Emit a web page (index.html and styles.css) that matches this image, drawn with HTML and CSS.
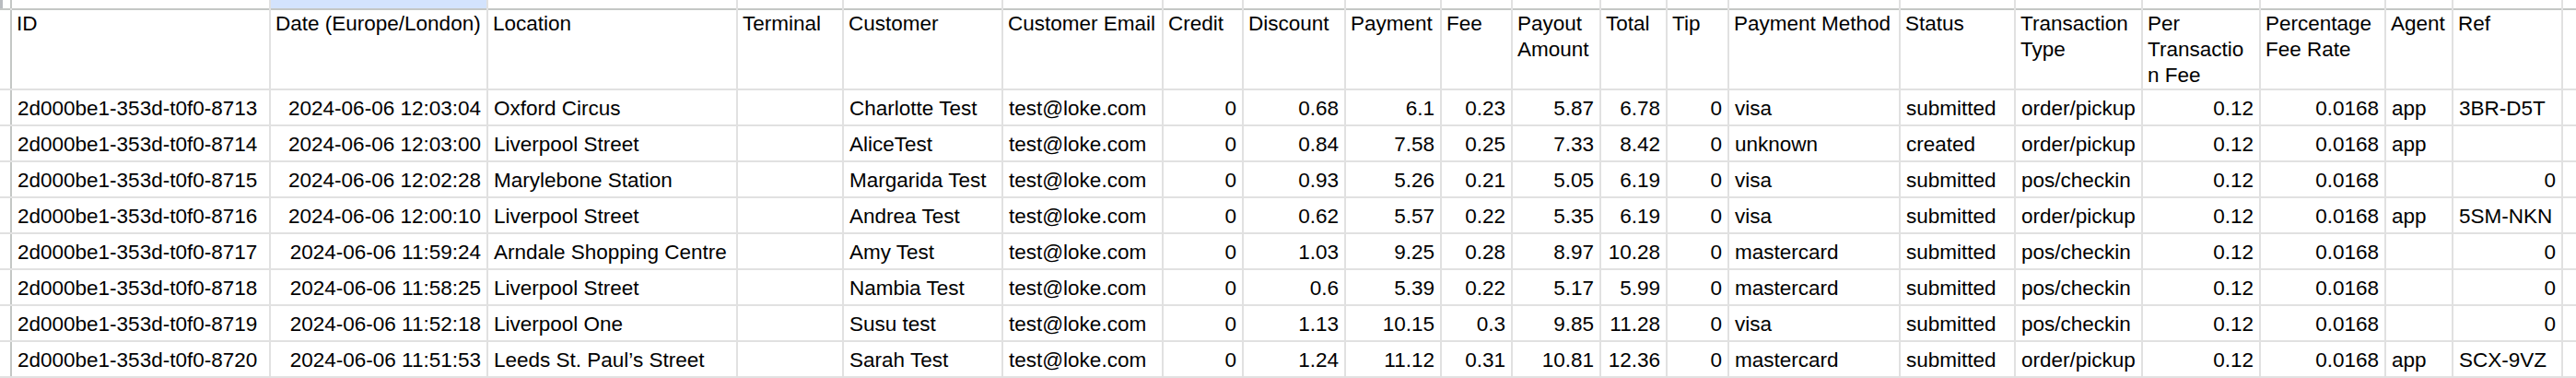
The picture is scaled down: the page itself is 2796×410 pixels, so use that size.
FILE: index.html
```html
<!DOCTYPE html>
<html lang="en">
<head>
<meta charset="utf-8">
<title>Transactions</title>
<link rel="stylesheet" href="styles.css">
</head>
<body>
<div class="sheet">
  <div class="row letters">
    <div class="corner"></div>
    <div class="col"></div><div class="col sel"></div><div class="col"></div><div class="col"></div><div class="col"></div>
    <div class="col"></div><div class="col"></div><div class="col"></div><div class="col"></div><div class="col"></div>
    <div class="col"></div><div class="col"></div><div class="col"></div><div class="col"></div><div class="col"></div>
    <div class="col"></div><div class="col"></div><div class="col"></div><div class="col"></div><div class="col"></div>
    <div class="col"></div>
  </div>
  <div class="row head">
    <div class="rh"></div>
    <div class="c">ID</div><div class="c">Date (Europe/London)</div><div class="c">Location</div><div class="c">Terminal</div><div class="c">Customer</div>
    <div class="c">Customer Email</div><div class="c">Credit</div><div class="c">Discount</div><div class="c">Payment</div><div class="c">Fee</div>
    <div class="c">Payout Amount</div><div class="c">Total</div><div class="c">Tip</div><div class="c">Payment Method</div><div class="c">Status</div>
    <div class="c">Transaction Type</div><div class="c tight">Per Transaction Fee</div><div class="c">Percentage Fee Rate</div><div class="c">Agent</div><div class="c">Ref</div>
    <div class="c"></div>
  </div>
  <div class="row">
    <div class="rh"></div>
    <div class="c">2d000be1-353d-t0f0-8713</div><div class="c n">2024-06-06 12:03:04</div><div class="c">Oxford Circus</div><div class="c"></div><div class="c">Charlotte Test</div>
    <div class="c">test@loke.com</div><div class="c n">0</div><div class="c n">0.68</div><div class="c n">6.1</div><div class="c n">0.23</div>
    <div class="c n">5.87</div><div class="c n">6.78</div><div class="c n">0</div><div class="c">visa</div><div class="c">submitted</div>
    <div class="c">order/pickup</div><div class="c n">0.12</div><div class="c n">0.0168</div><div class="c">app</div><div class="c">3BR-D5T</div>
    <div class="c"></div>
  </div>
  <div class="row">
    <div class="rh"></div>
    <div class="c">2d000be1-353d-t0f0-8714</div><div class="c n">2024-06-06 12:03:00</div><div class="c">Liverpool Street</div><div class="c"></div><div class="c">AliceTest</div>
    <div class="c">test@loke.com</div><div class="c n">0</div><div class="c n">0.84</div><div class="c n">7.58</div><div class="c n">0.25</div>
    <div class="c n">7.33</div><div class="c n">8.42</div><div class="c n">0</div><div class="c">unknown</div><div class="c">created</div>
    <div class="c">order/pickup</div><div class="c n">0.12</div><div class="c n">0.0168</div><div class="c">app</div><div class="c"></div>
    <div class="c"></div>
  </div>
  <div class="row">
    <div class="rh"></div>
    <div class="c">2d000be1-353d-t0f0-8715</div><div class="c n">2024-06-06 12:02:28</div><div class="c">Marylebone Station</div><div class="c"></div><div class="c">Margarida Test</div>
    <div class="c">test@loke.com</div><div class="c n">0</div><div class="c n">0.93</div><div class="c n">5.26</div><div class="c n">0.21</div>
    <div class="c n">5.05</div><div class="c n">6.19</div><div class="c n">0</div><div class="c">visa</div><div class="c">submitted</div>
    <div class="c">pos/checkin</div><div class="c n">0.12</div><div class="c n">0.0168</div><div class="c"></div><div class="c n">0</div>
    <div class="c"></div>
  </div>
  <div class="row">
    <div class="rh"></div>
    <div class="c">2d000be1-353d-t0f0-8716</div><div class="c n">2024-06-06 12:00:10</div><div class="c">Liverpool Street</div><div class="c"></div><div class="c">Andrea Test</div>
    <div class="c">test@loke.com</div><div class="c n">0</div><div class="c n">0.62</div><div class="c n">5.57</div><div class="c n">0.22</div>
    <div class="c n">5.35</div><div class="c n">6.19</div><div class="c n">0</div><div class="c">visa</div><div class="c">submitted</div>
    <div class="c">order/pickup</div><div class="c n">0.12</div><div class="c n">0.0168</div><div class="c">app</div><div class="c">5SM-NKN</div>
    <div class="c"></div>
  </div>
  <div class="row">
    <div class="rh"></div>
    <div class="c">2d000be1-353d-t0f0-8717</div><div class="c n">2024-06-06 11:59:24</div><div class="c">Arndale Shopping Centre</div><div class="c"></div><div class="c">Amy Test</div>
    <div class="c">test@loke.com</div><div class="c n">0</div><div class="c n">1.03</div><div class="c n">9.25</div><div class="c n">0.28</div>
    <div class="c n">8.97</div><div class="c n">10.28</div><div class="c n">0</div><div class="c">mastercard</div><div class="c">submitted</div>
    <div class="c">pos/checkin</div><div class="c n">0.12</div><div class="c n">0.0168</div><div class="c"></div><div class="c n">0</div>
    <div class="c"></div>
  </div>
  <div class="row">
    <div class="rh"></div>
    <div class="c">2d000be1-353d-t0f0-8718</div><div class="c n">2024-06-06 11:58:25</div><div class="c">Liverpool Street</div><div class="c"></div><div class="c">Nambia Test</div>
    <div class="c">test@loke.com</div><div class="c n">0</div><div class="c n">0.6</div><div class="c n">5.39</div><div class="c n">0.22</div>
    <div class="c n">5.17</div><div class="c n">5.99</div><div class="c n">0</div><div class="c">mastercard</div><div class="c">submitted</div>
    <div class="c">pos/checkin</div><div class="c n">0.12</div><div class="c n">0.0168</div><div class="c"></div><div class="c n">0</div>
    <div class="c"></div>
  </div>
  <div class="row">
    <div class="rh"></div>
    <div class="c">2d000be1-353d-t0f0-8719</div><div class="c n">2024-06-06 11:52:18</div><div class="c">Liverpool One</div><div class="c"></div><div class="c">Susu test</div>
    <div class="c">test@loke.com</div><div class="c n">0</div><div class="c n">1.13</div><div class="c n">10.15</div><div class="c n">0.3</div>
    <div class="c n">9.85</div><div class="c n">11.28</div><div class="c n">0</div><div class="c">visa</div><div class="c">submitted</div>
    <div class="c">pos/checkin</div><div class="c n">0.12</div><div class="c n">0.0168</div><div class="c"></div><div class="c n">0</div>
    <div class="c"></div>
  </div>
  <div class="row">
    <div class="rh"></div>
    <div class="c">2d000be1-353d-t0f0-8720</div><div class="c n">2024-06-06 11:51:53</div><div class="c">Leeds St. Paul’s Street</div><div class="c"></div><div class="c">Sarah Test</div>
    <div class="c">test@loke.com</div><div class="c n">0</div><div class="c n">1.24</div><div class="c n">11.12</div><div class="c n">0.31</div>
    <div class="c n">10.81</div><div class="c n">12.36</div><div class="c n">0</div><div class="c">mastercard</div><div class="c">submitted</div>
    <div class="c">order/pickup</div><div class="c n">0.12</div><div class="c n">0.0168</div><div class="c">app</div><div class="c">SCX-9VZ</div>
    <div class="c"></div>
  </div>
</div>
</body>
</html>
```
FILE: styles.css
```css
html, body {
  margin: 0;
  padding: 0;
  background: #ffffff;
  overflow: hidden;
}

body {
  width: 2796px;
  height: 410px;
  font-family: "Liberation Sans", Arial, sans-serif;
  font-size: 22.5px;
  color: #000000;
}

.sheet {
  display: grid;
  grid-template-columns:
    11px 279px 234px 269px 113px 171px 172px 85px 109px 102px 75px
    94px 70px 65px 184px 123px 136px 126px 134px 71px 117px 1fr;
  grid-template-rows: 9px 85px repeat(8, 37px);
  gap: 2px;
  background: #e1e1e1;
  width: 2796px;
  height: 410px;
  align-content: start;
}

.row {
  display: contents;
}

.corner {
  background: linear-gradient(to right, #b9bcc0 3px, #ffffff 3px);
  box-shadow: 0 2px 0 #c4c7c5, 2px 0 0 #c4c7c5;
}

.col {
  background: #ffffff;
  box-shadow: 0 2px 0 #c4c7c5;
}

.col.sel {
  background: #d3e3fd;
}

.rh {
  background: #ffffff;
  box-shadow: 2px 0 0 #c4c7c5;
}

.c {
  background: #ffffff;
  padding: 0 6px 5px 6px;
  line-height: 25px;
  white-space: nowrap;
  overflow: hidden;
  display: flex;
  align-items: flex-end;
}

.c.n {
  justify-content: flex-end;
}

.head .c {
  white-space: normal;
  overflow-wrap: anywhere;
  align-items: flex-start;
  line-height: 28px;
  padding: 1px 4px 0 5px;
}

.head .c.tight {
  padding-right: 10px;
}
```
